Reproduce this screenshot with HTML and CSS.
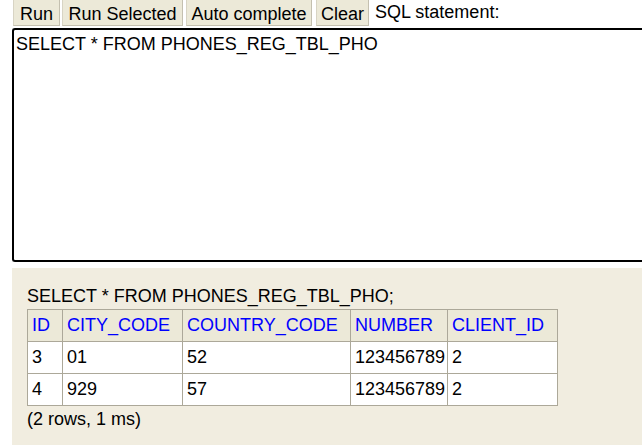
FILE: index.html
```html
<!DOCTYPE html>
<html>
<head>
<meta charset="utf-8">
<link rel="stylesheet" href="styles.css">
</head>
<body>
<div class="page">
  <div class="toolbar">
    <button class="btn btn-run">Run</button>
    <button class="btn btn-sel">Run Selected</button>
    <button class="btn btn-auto">Auto complete</button>
    <button class="btn btn-clear">Clear</button>
    <span class="label">SQL statement:</span>
  </div>
  <div class="editor">SELECT * FROM PHONES_REG_TBL_PHO</div>
  <div class="result">
    <div class="stmt">SELECT * FROM PHONES_REG_TBL_PHO;</div>
    <table class="grid">
      <colgroup>
        <col class="c-id"><col class="c-city"><col class="c-country"><col class="c-number"><col class="c-client">
      </colgroup>
      <tr><th>ID</th><th>CITY_CODE</th><th>COUNTRY_CODE</th><th>NUMBER</th><th>CLIENT_ID</th></tr>
      <tr><td>3</td><td>01</td><td>52</td><td>123456789</td><td>2</td></tr>
      <tr><td>4</td><td>929</td><td>57</td><td>123456789</td><td>2</td></tr>
    </table>
    <div class="info">(2 rows, 1 ms)</div>
  </div>
</div>
</body>
</html>
```

FILE: styles.css
```css
html, body {
  margin: 0;
  padding: 0;
  background: #ffffff;
  overflow: hidden;
  height: 445px;
}
.page {
  font-family: "Liberation Sans", Arial, sans-serif;
  font-size: 18px;
  color: #000;
  padding-left: 12px;
  width: 660px;
}
.toolbar {
  display: flex;
  align-items: flex-start;
  height: 27px;
  padding-left: 1px;
}
.btn {
  font-family: "Liberation Sans", Arial, sans-serif;
  font-size: 18px;
  color: #000;
  background: #ece9d8;
  border: none;
  border-left: 1px solid #d8d4c4;
  border-right: 1px solid #c4c0b0;
  border-bottom: 1px solid #c4c0b0;
  padding: 2px 0 0 0;
  margin: 0 2px 0 0;
  height: 26px;
  line-height: 20px;
  text-align: center;
  box-sizing: border-box;
  white-space: nowrap;
}
.btn-run { width: 47px; }
.btn-sel { width: 121px; margin-right: 3px; }
.btn-auto { width: 126px; margin-right: 4px; }
.btn-clear { width: 53px; margin-right: 6px; }
.label {
  padding-top: 2px;
  line-height: 20px;
}
.editor {
  margin-top: 1px;
  height: 226px;
  border: 2px solid #000;
  border-right: none;
  border-radius: 3px 0 0 3px;
  padding: 4px 0 0 2px;
  line-height: 20px;
}
.result {
  margin-top: 6px;
  background: #f1ede0;
  padding: 18px 15px 0 15px;
  height: 159px;
}
.stmt {
  line-height: 20px;
  margin-bottom: 3px;
}
.grid {
  border-collapse: collapse;
  table-layout: fixed;
  width: 530px;
  background: #fff;
  border: 1px solid #aca899;
}
.c-id { width: 35px; }
.c-city { width: 120px; }
.c-country { width: 168px; }
.c-number { width: 97px; }
.c-client { width: 110px; }
.grid th, .grid td {
  border: 1px solid #aca899;
  padding: 5px 0 6px 4px;
  text-align: left;
  font-weight: normal;
  line-height: 20px;
  white-space: nowrap;
  overflow: hidden;
}
.grid th {
  color: #0000ff;
  background: #ece9d8;
}
.info {
  margin-top: 3px;
  line-height: 20px;
}
```
